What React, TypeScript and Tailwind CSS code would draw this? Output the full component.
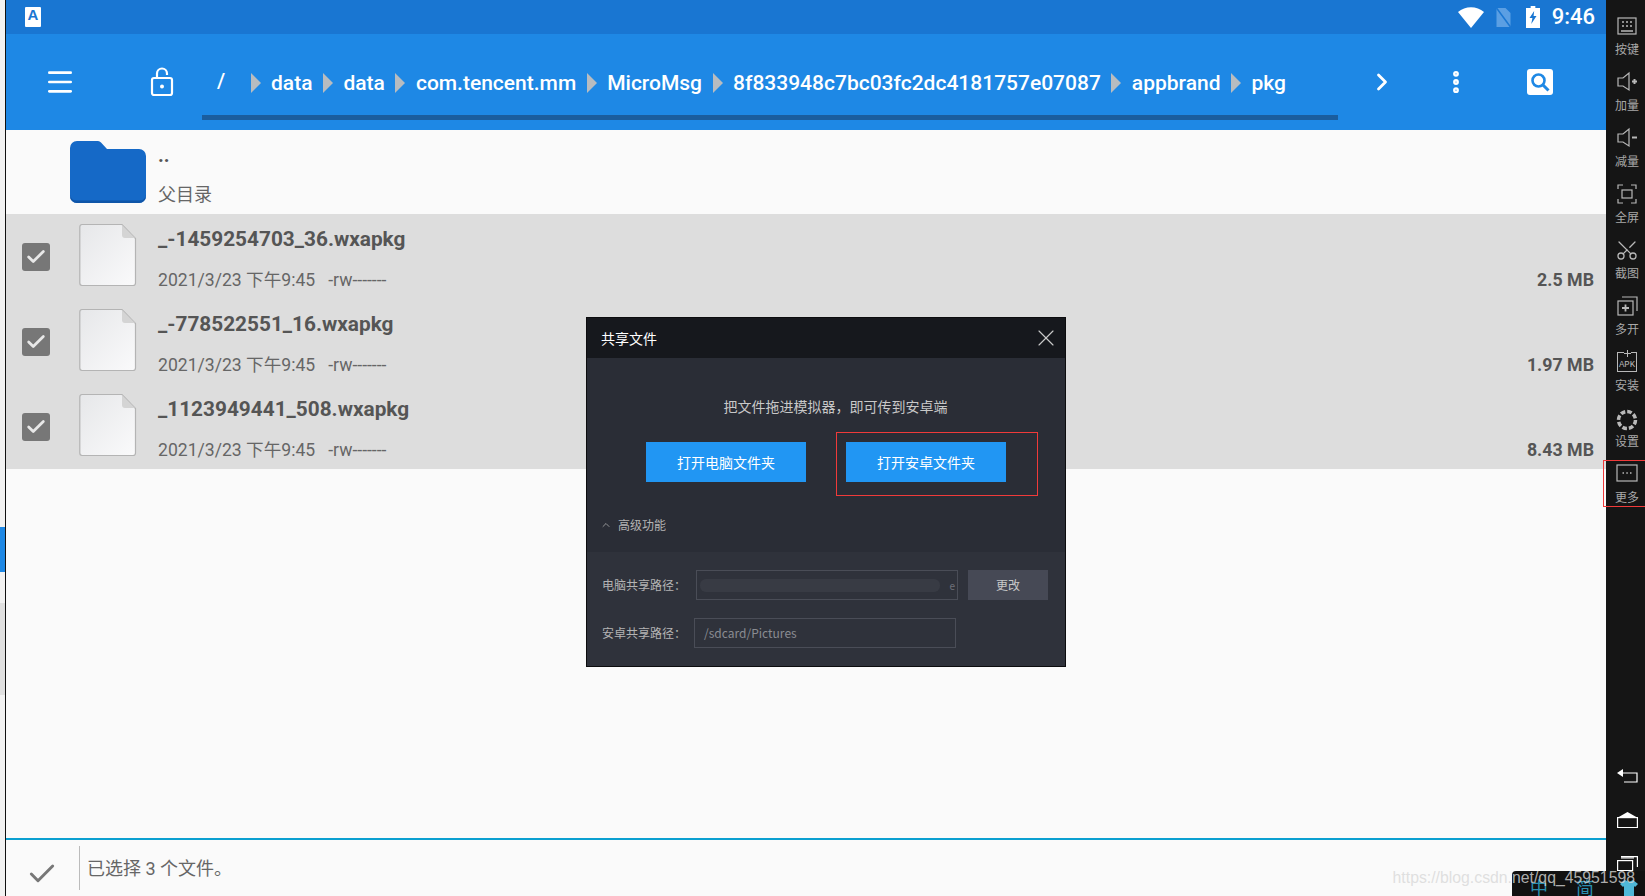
import { Check, ChevronRight, ChevronUp, Menu, MoreVertical, Scissors, X } from "lucide-react";
import type { ReactNode } from "react";

const crumbs = [
  "data",
  "data",
  "com.tencent.mm",
  "MicroMsg",
  "8f833948c7bc03fc2dc4181757e07087",
  "appbrand",
  "pkg",
];

const files = [
  { name: "_-1459254703_36.wxapkg", size: "2.5 MB" },
  { name: "_-778522551_16.wxapkg", size: "1.97 MB" },
  { name: "_1123949441_508.wxapkg", size: "8.43 MB" },
];

const StrokeIcon = ({ children }: { children: ReactNode }) => (
  <svg width="24" height="24" viewBox="0 0 24 24" fill="none" stroke="#b8b8b8" strokeWidth="1.2">
    {children}
  </svg>
);

const sideTools: { label: string; icon: ReactNode }[] = [
  {
    label: "按键",
    icon: (
      <StrokeIcon>
        <rect x="3" y="4" width="18" height="16" />
        <path d="M7 8h2M11 8h2M15 8h2M7 12h2M11 12h2M15 12h2M6 17h12" strokeWidth="1.6" />
      </StrokeIcon>
    ),
  },
  {
    label: "加量",
    icon: (
      <StrokeIcon>
        <path d="M3 8h5l6-5v17l-6-4H3z" />
        <path d="M17 11.500h5M19.500 9v5" strokeWidth="2" />
      </StrokeIcon>
    ),
  },
  {
    label: "减量",
    icon: (
      <StrokeIcon>
        <path d="M3 8h5l6-5v17l-6-4H3z" />
        <path d="M17 11.500h5" strokeWidth="2" />
      </StrokeIcon>
    ),
  },
  {
    label: "全屏",
    icon: (
      <StrokeIcon>
        <path d="M3 7V3h5M16 3h5v4M21 17v4h-5M8 21H3v-4" />
        <rect x="7" y="8" width="10" height="8" />
      </StrokeIcon>
    ),
  },
  {
    label: "截图",
    icon: <Scissors size={24} strokeWidth={1.3} color="#b8b8b8" className="-rotate-90" />,
  },
  {
    label: "多开",
    icon: (
      <StrokeIcon>
        <path d="M7 3h15v14" />
        <rect x="3" y="7" width="15" height="14" />
        <path d="M7 14h7M10.500 10.500v7" strokeWidth="1.8" />
      </StrokeIcon>
    ),
  },
  {
    label: "安装",
    icon: (
      <div className="relative flex h-[20px] w-[20px] items-end justify-center border border-[#b8b8b8] pb-[1px] text-[9px] leading-[10px] text-[#b8b8b8] font-['Liberation_Mono',monospace]">
        APK
        <svg width="7" height="7" viewBox="0 0 7 7" stroke="#b8b8b8" className="absolute -top-[3px] left-[6px] bg-[#151515]">
          <path d="M0 3.500h7M3.500 0v7" />
        </svg>
      </div>
    ),
  },
  {
    label: "设置",
    icon: (
      <svg width="24" height="24" viewBox="0 0 24 24" fill="none" stroke="#b8b8b8" className="mt-[3px]">
        <circle cx="12" cy="12" r="8.500" strokeWidth="3.500" strokeDasharray="4.670 2" />
      </svg>
    ),
  },
  {
    label: "更多",
    icon: (
      <StrokeIcon>
        <rect x="2" y="3" width="20" height="16" />
        <path d="M7.500 11h1.500M11.300 11h1.500M15 11h1.500" strokeWidth="1.6" />
      </StrokeIcon>
    ),
  },
];

const Sidebar = () => (
  <aside className="flex w-[39px] shrink-0 flex-col items-center bg-[#151515] pt-[14px] pl-[3px] font-['Noto_Sans_CJK_SC',sans-serif]">
    {sideTools.map((tool) => (
      <div key={tool.label} className="flex h-[56px] w-full flex-col items-center">
        <div className="flex h-[24px] items-center justify-center">{tool.icon}</div>
        <span className="mt-[2px] text-[12px] leading-[18px] text-[#a8a8a8]">{tool.label}</span>
      </div>
    ))}
    <div className="mt-auto mb-[25px] flex flex-col items-center gap-[28px]">
      <svg width="21" height="16" viewBox="0 0 21 16" fill="none" stroke="#fff" strokeWidth="1.2">
        <path d="M5 5h15v9H7" />
        <path d="M0 5l6-4v8z" fill="#fff" stroke="none" />
      </svg>
      <svg width="21" height="16" viewBox="0 0 21 16" fill="none" stroke="#fff" strokeWidth="1.2">
        <rect x="0.600" y="5.600" width="19.800" height="10" />
        <path d="M0 6l10.500-6L21 6z" fill="#fff" stroke="none" />
      </svg>
      <svg width="21" height="15" viewBox="0 0 21 15" fill="none" stroke="#fff" strokeWidth="1.2">
        <rect x="0.600" y="4.600" width="15" height="10" />
        <path d="M4 2h13M4 0.600h16.400V11" />
      </svg>
    </div>
  </aside>
);

const StatusBar = () => (
  <div className="flex h-[34px] shrink-0 items-center bg-[#1976d2] pr-[11px] pl-[19px]">
    <div className="flex h-[20px] w-[16px] items-start justify-center rounded-[1px] bg-white text-[15px] leading-[16px] font-bold text-[#1976d2] font-['Liberation_Sans',sans-serif]">
      A
    </div>
    <div className="ml-auto flex items-center">
      <svg width="26" height="21" viewBox="0 0 22 21" fill="#fff" preserveAspectRatio="none">
        <path d="M0 5c6-6.500 16-6.500 22 0L11 21z" />
      </svg>
      <svg width="17" height="21" viewBox="0 0 16 21" fill="none" className="ml-[11px]">
        <path d="M1 1h9l5 5v14H1z" fill="#5b9fe3" />
        <path d="M1 1l14 19" stroke="#1976d2" strokeWidth="1.500" />
      </svg>
      <svg width="14" height="22" viewBox="0 0 12 22" className="ml-[14px]" preserveAspectRatio="none">
        <path d="M4 0h4v2h4v20H0V2h4z" fill="#fff" />
        <path d="M7 5L3 12h2.500L4.500 18 9 10H6.500z" fill="#1976d2" />
      </svg>
      <span className="ml-[12px] text-[22px] leading-none font-medium text-white font-['Roboto',sans-serif]">9:46</span>
    </div>
  </div>
);

const Toolbar = () => (
  <div className="relative flex h-[96px] shrink-0 items-center bg-[#1e88e5] text-white font-['Roboto',sans-serif]">
    <Menu size={32} strokeWidth={2} className="ml-[38px] shrink-0" />
    <svg width="24" height="30" viewBox="0 0 24 30" fill="none" stroke="#fff" strokeWidth="2.200" className="ml-[74px] shrink-0">
      <rect x="2" y="11" width="20" height="17" rx="2" />
      <path d="M7 11V6.500a5 5 0 0 1 10 0V8" />
      <circle cx="12" cy="19.500" r="2" fill="#fff" stroke="none" />
    </svg>
    <span className="ml-[43px] w-[23px] shrink-0 text-[21px] font-medium">/</span>
    <div className="mt-[2px] flex items-center">
      {crumbs.map((crumb, i) => (
        <div key={i} className="flex items-center">
          <svg width="10" height="20" viewBox="0 0 10 20" className="mx-[10.500px] shrink-0">
            <path d="M0 0l10 10L0 20z" fill="#b8bcc0" />
          </svg>
          <span className="text-[21px] leading-none font-medium whitespace-nowrap">{crumb}</span>
        </div>
      ))}
    </div>
    <ChevronRight size={28} strokeWidth={2.4} className="absolute top-[34px] left-[1362px]" />
    <MoreVertical size={28} strokeWidth={3} className="absolute top-[34px] left-[1436px]" />
    <div className="absolute top-[35px] left-[1521px] flex h-[26px] w-[26px] items-center justify-center rounded-[3px] bg-white">
      <svg width="20" height="20" viewBox="0 0 20 20" fill="none" stroke="#1e88e5">
        <circle cx="8.500" cy="8.500" r="6" strokeWidth="2.600" />
        <path d="M13 13l5.500 5.500" strokeWidth="3" />
      </svg>
    </div>
    <div className="absolute top-[81px] left-[196px] h-[5px] w-[1136px] bg-[#1a5d9e]" />
  </div>
);

const BlankFile = () => (
  <svg width="58" height="64" viewBox="0 0 58 64" className="shrink-0">
    <defs>
      <linearGradient id="sheet" x1="0" y1="0" x2="1" y2="1">
        <stop offset="0" stopColor="#e6e7e9" />
        <stop offset="1" stopColor="#fafafb" />
      </linearGradient>
    </defs>
    <path d="M3 1.500h40l13.500 14V60a2.500 2.500 0 0 1-2.500 2.500H3A2.500 2.500 0 0 1 .800 60V4A2.500 2.500 0 0 1 3 1.500z" fill="url(#sheet)" stroke="#b4b4b4" strokeWidth="1.200" />
    <path d="M43 2v10a3 3 0 0 0 3 3h10z" fill="#d4d4d4" />
  </svg>
);

const FileRow = ({ name, size }: { name: string; size: string }) => (
  <div className="flex h-[85px] items-center">
    <div className="ml-[16px] flex h-[28px] w-[28px] shrink-0 items-center justify-center rounded-[3px] bg-[#777777]">
      <Check size={22} strokeWidth={3} color="#e8e8e8" />
    </div>
    <div className="ml-[29px] -mt-[4px]">
      <BlankFile />
    </div>
    <div className="ml-[21px] flex h-full flex-col">
      <span className="mt-[9px] text-[20.800px] leading-[32px] font-bold text-[#555555]">{name}</span>
      <div className="mt-[12px] flex text-[17.600px] leading-[26px] text-[#666666]">
        <span>2021/3/23 下午9:45</span>
        <span className="ml-[13px]">-rw-------</span>
      </div>
    </div>
    <span className="mt-[46px] mr-[12px] ml-auto text-[17.800px] leading-[26px] font-bold text-[#555555]">{size}</span>
  </div>
);

const FileList = () => (
  <div className="flex-1 bg-[#fafafa] font-['Roboto','Noto_Sans_CJK_SC',sans-serif]">
    <div className="flex h-[84px] items-center">
      <svg width="76" height="62" viewBox="0 0 76 62" className="ml-[64px] shrink-0">
        <path d="M7 0h21a4 4 0 0 1 3 1.500L37 8h32a7 7 0 0 1 7 7v40a7 7 0 0 1-7 7H7a7 7 0 0 1-7-7V7a7 7 0 0 1 7-7z" fill="#1569c7" />
        <path d="M0 54v1a7 7 0 0 0 7 7h62a7 7 0 0 0 7-7v-1a7 7 0 0 1-7 5.500H7A7 7 0 0 1 0 54z" fill="#0f55a8" />
      </svg>
      <div className="ml-[12px] flex h-full flex-col">
        <span className="mt-[13px] text-[20px] leading-[24px] font-bold text-[#555555]">..</span>
        <span className="mt-[15px] text-[18px] leading-[26px] text-[#666666]">父目录</span>
      </div>
    </div>
    <div className="bg-[#dddddd]">
      {files.map((file) => (
        <FileRow key={file.name} name={file.name} size={file.size} />
      ))}
    </div>
  </div>
);

const BottomBar = () => (
  <div className="flex h-[58px] shrink-0 items-center border-t-[2px] border-[#0a9fd0] bg-[#fafafa] font-['Roboto','Noto_Sans_CJK_SC',sans-serif]">
    <Check size={32} strokeWidth={2.2} color="#777777" className="mt-[12px] ml-[20px] shrink-0" />
    <div className="ml-[21px] h-[44px] w-[1px] bg-[#bbbbbb]" />
    <span className="ml-[7px] text-[18px] text-[#666666]">已选择 3 个文件。</span>
  </div>
);

const ShareDialog = () => (
  <div className="absolute top-[317px] left-[586px] flex h-[350px] w-[480px] flex-col border border-[#0c0c0e] bg-[#2a2d36] font-['Noto_Sans_CJK_SC',sans-serif]">
    <div className="flex h-[40px] shrink-0 items-center justify-between bg-[#16181d] pr-[5px] pl-[14px]">
      <span className="text-[14px] text-white">共享文件</span>
      <X size={28} strokeWidth={1} color="#c8c8c8" />
    </div>
    <p className="mt-[38px] pl-[19px] text-center text-[14px] leading-[20px] text-[#c8c8c8]">把文件拖进模拟器，即可传到安卓端</p>
    <div className="mt-[26px] flex pl-[59px]">
      <button className="h-[40px] w-[160px] bg-[#2196f3] text-[14px] text-white">打开电脑文件夹</button>
      <div className="relative ml-[40px]">
        <button className="h-[40px] w-[160px] bg-[#2196f3] text-[14px] text-white">打开安卓文件夹</button>
        <div className="absolute -top-[10px] -left-[10px] h-[64px] w-[202px] border border-[#f03a3a]" />
      </div>
    </div>
    <div className="mt-[33px] flex items-center pl-[13px] text-[#b4b4b4]">
      <ChevronUp size={12} strokeWidth={1.5} />
      <span className="ml-[6px] text-[12px] leading-[20px]">高级功能</span>
    </div>
    <div className="mt-[17px] flex-1 bg-[#2f323b] pt-[18px] text-[12px] text-[#b4b4b4]">
      <div className="flex h-[30px] items-center pl-[15px]">
        <span className="w-[94px] shrink-0">电脑共享路径：</span>
        <div className="flex h-[30px] w-[262px] items-center justify-between border border-[#4a4d57] pr-[2px] pl-[3px]">
          <div className="h-[13px] w-[240px] rounded-[6px] bg-[#383b44]" />
          <span className="text-[10px] text-[#6e7079]">e</span>
        </div>
        <button className="ml-[10px] h-[30px] w-[80px] bg-[#464955] text-[12px] text-[#c8c8c8]">更改</button>
      </div>
      <div className="mt-[18px] flex h-[30px] items-center pl-[15px]">
        <span className="w-[92px] shrink-0">安卓共享路径：</span>
        <div className="flex h-[30px] w-[262px] items-center border border-[#4a4d57] pl-[9px] text-[#8a8c92]">/sdcard/Pictures</div>
      </div>
    </div>
  </div>
);

export default function App() {
  return (
    <div className="relative flex h-[896px] w-[1645px] overflow-hidden bg-[#fafafa]">
      <div className="flex w-[5px] shrink-0 flex-col bg-[#f2f2f2]">
        <div className="mt-[527px] h-[45px] bg-[#1e88e5]" />
        <div className="mt-[31px] h-[92px] bg-[#e0e0e0]" />
      </div>
      <div className="w-[1px] shrink-0 bg-[#111111]" />
      <main className="flex min-w-0 flex-1 flex-col">
        <StatusBar />
        <Toolbar />
        <FileList />
        <BottomBar />
      </main>
      <Sidebar />
      <ShareDialog />
      <div className="absolute top-[460px] left-[1603px] h-[47px] w-[42px] border border-r-0 border-[#f03a3a]" />
      <div className="absolute right-0 bottom-0 flex h-[25px] w-[133px] items-center overflow-hidden rounded-tl-[4px] bg-[#111111] pt-[8px] pl-[18px] text-[18px] text-[#2a8fb0] font-['Noto_Sans_CJK_SC',sans-serif]">
        <span>中</span>
        <span className="ml-[28px]">简</span>
        <svg width="18" height="18" viewBox="0 0 18 18" fill="#4fb8d8" className="ml-[26px]">
          <path d="M5 1l4 2 4-2 5 4-3 3-1-1v11H4V7L3 8 0 5z" />
        </svg>
      </div>
      <span className="absolute right-[10px] bottom-[6px] text-[15.800px] leading-[24px] text-[#d8d8d8]/80 font-['Liberation_Sans',sans-serif]">
        https://blog.csdn.net/qq_45951598
      </span>
    </div>
  );
}
